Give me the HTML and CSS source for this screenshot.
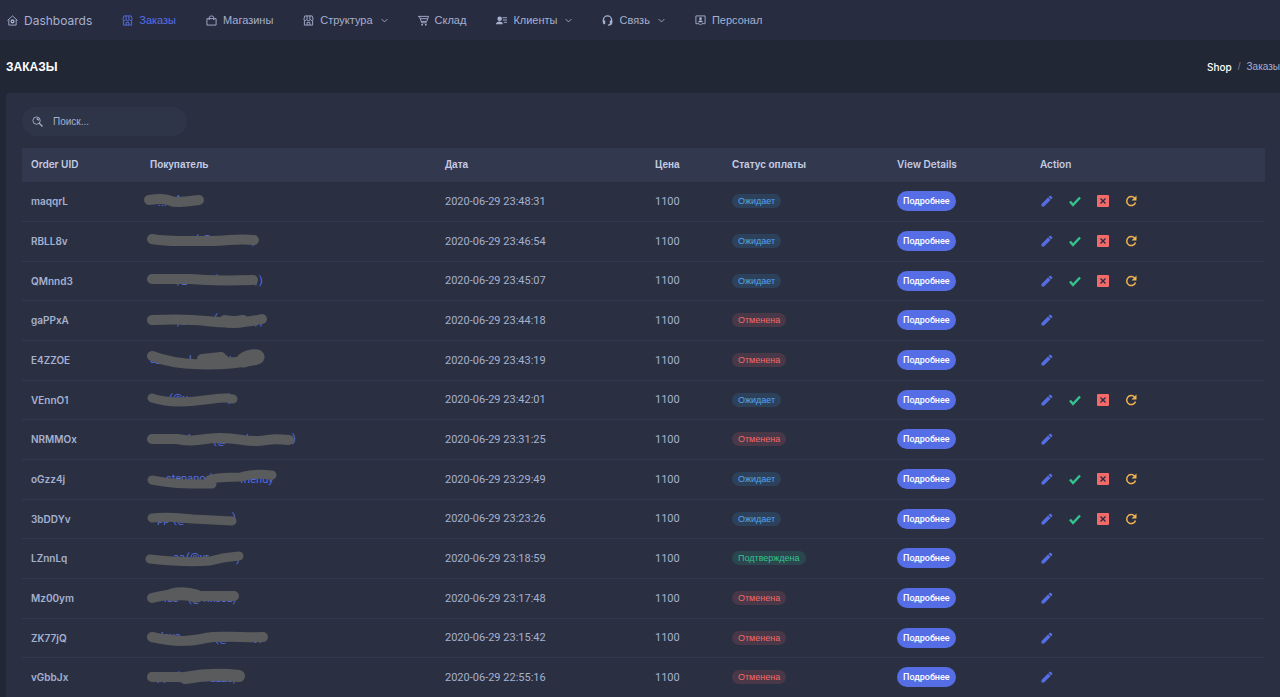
FILE: index.html
```html
<!DOCTYPE html>
<html lang="ru">
<head>
    <meta charset="UTF-8">
    <meta name="viewport" content="width=device-width, initial-scale=1.0">
    <title>Заказы</title>
    <link rel="stylesheet" href="styles.css">
</head>
<body>
    <!-- icons -->
    <svg class="sprite" aria-hidden="true">
        <symbol id="i-home" viewBox="0 0 24 24"><path d="M1 12 12 2l11 10M4 10v12h16V10" fill="none" stroke="currentColor" stroke-width="2"/><circle cx="12" cy="14" r="3" fill="none" stroke="currentColor" stroke-width="3"/></symbol>
        <symbol id="i-store" viewBox="0 0 24 24"><path d="M4 2h16l2 7c0 4-5 4-6 1-1 3-7 3-8 0-1 3-6 3-6-1zM9 2v8M15 2v8M3 12v10h18v-10M9 22v-6h6v6" fill="none" stroke="currentColor" stroke-width="2"/></symbol>
        <symbol id="i-bag" viewBox="0 0 24 24"><path d="M2 8h20v14H2zM7 11V6a5 4 0 0 1 10 0v5" fill="none" stroke="currentColor" stroke-width="2"/></symbol>
        <symbol id="i-cart" viewBox="0 0 24 24"><path d="M0 3h23l-4 11H7L3 3M5 8h16M7 14l1 3h11" fill="none" stroke="currentColor" stroke-width="2"/><circle cx="9" cy="21" r="2" fill="currentColor"/><circle cx="17" cy="21" r="2" fill="currentColor"/></symbol>
        <symbol id="i-users" viewBox="0 0 24 24"><circle cx="8" cy="8" r="5" fill="currentColor"/><path d="M0 20c0-8 15-8 15 0z" fill="currentColor"/><path d="M14 6h10M15 11h9M17 16h7" stroke="currentColor" stroke-width="2"/></symbol>
        <symbol id="i-phones" viewBox="0 0 24 24"><path d="M3 15v-4a9 9 0 0 1 18 0v6c0 3-3 5-8 5" fill="none" stroke="currentColor" stroke-width="3"/><path d="M2 12h5v8H4l-2-2zM17 12h5v6l-2 2h-3z" fill="currentColor"/></symbol>
        <symbol id="i-staff" viewBox="0 0 24 24"><path d="M2 2h20v17h-7l-3 3-3-3H2z" fill="none" stroke="currentColor" stroke-width="2"/><circle cx="12" cy="8" r="3" fill="currentColor"/><path d="M7 16c0-6 10-6 10 0z" fill="currentColor"/></symbol>
        <symbol id="i-down" viewBox="0 0 24 24"><path d="m2 7 10 10L22 7" fill="none" stroke="currentColor" stroke-width="3"/></symbol>
        <symbol id="i-search" viewBox="0 0 24 24"><circle cx="10" cy="10" r="8" fill="none" stroke="currentColor" stroke-width="2"/><path d="m15 15 8 8M10 6a4 4 0 0 1 4 4" fill="none" stroke="currentColor" stroke-width="3"/></symbol>
        <symbol id="i-pencil" viewBox="0 0 24 24"><path d="M1 23v-5L14 5l5 5L6 23zM15 4l2-2c1-1 2-1 3 0l2 2c1 1 1 2 0 3l-2 2z" fill="currentColor"/></symbol>
        <symbol id="i-check" viewBox="0 0 24 24"><path d="m2 13 6 7L22 5" fill="none" stroke="currentColor" stroke-width="5"/></symbol>
        <symbol id="i-close" viewBox="0 0 24 24"><path fill-rule="evenodd" d="M2 0h20q2 0 2 2v20q0 2-2 2H2q-2 0-2-2V2q0-2 2-2zM8 6 6 8l4 4-4 4 2 2 4-4 4 4 2-2-4-4 4-4-2-2-4 4z" fill="currentColor"/></symbol>
        <symbol id="i-refresh" viewBox="0 0 24 24"><path d="M19 6a9 9 0 1 0 2 9" fill="none" stroke="currentColor" stroke-width="3"/><path d="M23 1v10H13z" fill="currentColor"/></symbol>
    </svg>

    <nav class="topnav">
        <a href="#" class="latin"><svg class="icon"><use href="#i-home"/></svg>Dashboards</a>
        <a href="#" class="active"><svg class="icon"><use href="#i-store"/></svg>Заказы</a>
        <a href="#"><svg class="icon"><use href="#i-bag"/></svg>Магазины</a>
        <a href="#"><svg class="icon"><use href="#i-store"/></svg>Структура<svg class="arrow"><use href="#i-down"/></svg></a>
        <a href="#"><svg class="icon"><use href="#i-cart"/></svg>Склад</a>
        <a href="#"><svg class="icon"><use href="#i-users"/></svg>Клиенты<svg class="arrow"><use href="#i-down"/></svg></a>
        <a href="#"><svg class="icon"><use href="#i-phones"/></svg>Связь<svg class="arrow"><use href="#i-down"/></svg></a>
        <a href="#"><svg class="icon"><use href="#i-staff"/></svg>Персонал</a>
    </nav>

    <header class="page-title">
        <h1>ЗАКАЗЫ</h1>
        <div class="breadcrumbs">
            <a href="#" class="latin">Shop</a>
            <span class="slash">/</span>
            <span>Заказы</span>
        </div>
    </header>

    <main class="card">
        <label class="search" for="search">
            <svg class="icon"><use href="#i-search"/></svg>
            <input type="text" id="search" placeholder="Поиск..." aria-label="Поиск">
        </label>
        <table class="orders">
            <thead>
                <tr>
                    <th class="col-uid latin">Order UID</th>
                    <th class="col-customer">Покупатель</th>
                    <th class="col-date">Дата</th>
                    <th class="col-price">Цена</th>
                    <th class="col-status">Статус оплаты</th>
                    <th class="col-details latin">View Details</th>
                    <th class="latin">Action</th>
                </tr>
            </thead>
            <tbody id="orders"></tbody>
        </table>
    </main>

    <script>
        const statuses = {
            wait: "Ожидает",
            cancel: "Отменена",
            done: "Подтверждена"
        };

        // marks: pieces of the name left visible, strokes: [path, width] painted over them
        const orders = [
            { uid: "maqqrL", time: "23:48:31", status: "wait", marks: [[17, 24, "..."], [35, 21, "^"]],
              strokes: [["M8 18C20 16 26 17 30 19S42 20 58 18", 10]] },
            { uid: "RBLL8v", time: "23:46:54", status: "wait", marks: [[54, 21, "("], [61, 21, "@"], [111, 22, ")"]],
              strokes: [["M11 17C27 20 50 19 69 19S95 16 113 18", 10]] },
            { uid: "QMnnd3", time: "23:45:07", status: "wait", marks: [[36, 22, ","], [41, 22, "_"], [73, 21, "(g"], [114, 22, ","], [118, 22, ")"]],
              strokes: [["M11 17H49C60 18 76 19 112 18", 10]] },
            { uid: "gaPPxA", time: "23:44:18", status: "cancel", marks: [[36, 24, ","], [41, 23, "_"], [73, 21, "("], [114, 24, ", ,"]],
              strokes: [["M11 19C34 18 48 18 65 20S105 22 121 18", 10], ["M84 20Q92 22 102 20", 12]] },
            { uid: "E4ZZOE", time: "23:43:19", status: "cancel", marks: [[9, 22, "a_"], [48, 22, "l"], [85, 21, "v"]],
              strokes: [["M11 15C36 25 77 26 114 19", 10], ["M61 18 80 16 86 22 114 19", 10], ["M103 19Q110 15 116 16", 15]] },
            { uid: "VEnnO1", time: "23:42:01", status: "wait", marks: [[28, 21, "(@v"], [87, 21, ")"]],
              strokes: [["M11 17C33 24 56 20 72 18S84 17 92 18", 9]] },
            { uid: "NRMMOx", time: "23:31:25", status: "cancel", marks: [[47, 22, "l"], [72, 24, "(@"], [105, 22, "l"], [151, 22, ")"]],
              strokes: [["M11 19H36C56 23 58 18 79 18S103 22 117 21 128 18 148 20", 10]] },
            { uid: "oGzz4j", time: "23:29:49", status: "wait", marks: [[25, 22, "stepano ("], [99, 23, "friendy"]],
              strokes: [["M11 20C32 24 40 24 71 24", 9], ["M68 20Q76 17 100 17 110 13 131 15", 9]] },
            { uid: "3bDDYv", time: "23:23:26", status: "wait", marks: [[16, 23, "pp"], [32, 23, "(@"], [49, 23, "o"], [91, 21, ")"]],
              strokes: [["M11 18C27 16 40 18 52 19L91 21", 9]] },
            { uid: "LZnnLq", time: "23:18:59", status: "done", marks: [[32, 22, "aa"], [45, 22, "(@vr"], [95, 23, ")"]],
              strokes: [["M9 20Q45 24 69 22 83 18 98 17", 9]] },
            { uid: "Mz00ym", time: "23:17:48", status: "cancel", marks: [[23, 23, "lee"], [47, 23, "(@vikesa)"]],
              strokes: [["M11 19Q37 12 59 17H93", 10], ["M31 16Q43 13 55 17", 13]] },
            { uid: "ZK77jQ", time: "23:15:42", status: "cancel", marks: [[20, 21, "leva"], [74, 23, "(@"], [113, 22, "y)"]],
              strokes: [["M11 18C38 24 51 22 65 19S88 19 122 18", 10]] },
            { uid: "vGbbJx", time: "22:55:16", status: "cancel", marks: [[16, 23, "pp"], [35, 22, "(@"], [69, 24, "azzo,"]],
              strokes: [["M11 19H39", 10], ["M44 20Q70 15 98 18", 12]] }
        ];

        const icon = (name, label) =>
            `<button type="button" class="act ${name}" aria-label="${label}"><svg><use href="#i-${name}"/></svg></button>`;

        document.querySelector("#orders").innerHTML = orders.map(order => `
            <tr>
                <td class="uid">${order.uid}</td>
                <td class="customer">
                    <svg>
                        ${order.marks.map(m => `<text x="${m[0]}" y="${m[1]}">${m[2]}</text>`).join("")}
                        ${order.strokes.map(s => `<path d="${s[0]}" stroke-width="${s[1]}"/>`).join("")}
                    </svg>
                </td>
                <td>2020-06-29 ${order.time}</td>
                <td>1100</td>
                <td><span class="badge ${order.status}">${statuses[order.status]}</span></td>
                <td><button type="button" class="details">Подробнее</button></td>
                <td>
                    <div class="actions">
                        ${icon("pencil", "Изменить")}
                        ${order.status === "wait" ? icon("check", "Подтвердить") + icon("close", "Отменить") + icon("refresh", "Обновить") : ""}
                    </div>
                </td>
            </tr>`).join("");
    </script>
</body>
</html>
```
FILE: styles.css
```css
* {
    box-sizing: border-box;
}

body {
    margin: 0;
    background: #222736;
    color: #a6b0cf;
    font-family: "Liberation Sans", Arial, sans-serif;
    font-size: 10px;
    overflow: hidden;
}

a {
    color: inherit;
    text-decoration: none;
}

button {
    border: 0;
    font-family: inherit;
    cursor: pointer;
}

.sprite {
    display: none;
}

.latin {
    font-family: Inter, sans-serif;
}

/* top menu */
.topnav {
    display: flex;
    gap: 30px;
    height: 40px;
    padding: 0 7px;
    background: #282c40;
    font-size: 11px;
}

.topnav a {
    display: flex;
    align-items: center;
}

.topnav .latin {
    font-size: 12px;
}

.topnav .active {
    color: #556ee6;
}

.icon {
    width: 11px;
    height: 11px;
    margin-right: 6px;
}

.arrow {
    width: 7px;
    height: 7px;
    margin-left: 8px;
}

/* title */
.page-title {
    display: flex;
    align-items: center;
    justify-content: space-between;
    height: 53px;
    padding-left: 6px;
}

.page-title h1 {
    margin: 0;
    color: #fff;
    font-size: 12px;
}

.breadcrumbs {
    display: flex;
    gap: 6px;
}

.breadcrumbs a {
    color: #fff;
    font-weight: 500;
}

.slash {
    color: #74788d;
}

/* card */
.card {
    margin-left: 6px;
    padding: 14px 15px 20px 16px;
    background: #2a3042;
    border-radius: 3px 0 0 0;
}

.search {
    display: flex;
    align-items: center;
    width: 165px;
    height: 29px;
    margin-bottom: 12px;
    padding: 0 10px;
    border-radius: 15px;
    background: #2e3548;
}

.search input {
    width: 100px;
    padding: 0;
    margin-left: 4px;
    border: 0;
    outline: 0;
    background: none;
    color: inherit;
    font-family: inherit;
    font-size: 10px;
}

.search input::placeholder {
    color: #a6b0cf;
}

/* orders */
.orders {
    width: 100%;
    border-collapse: collapse;
    table-layout: fixed;
}

.orders th,
.orders td {
    padding: 0 9px;
    text-align: left;
}

.orders th {
    height: 33px;
    background: #32394e;
    color: #c3cbe4;
    font-size: 10px;
}

.orders th.latin {
    font-weight: 600;
}

.orders td {
    height: 40px;
    border-top: 1px solid #32394e;
    font-family: Roboto, sans-serif;
    font-size: 11px;
}

.orders tr:nth-child(3n) td {
    height: 39px;
}

.col-uid {
    width: 119px;
}

.col-customer {
    width: 295px;
}

.col-date {
    width: 210px;
}

.col-price {
    width: 77px;
}

.col-status {
    width: 165px;
}

.col-details {
    width: 143px;
}

.orders .uid {
    font-family: Inter, sans-serif;
    font-size: 10px;
    font-weight: 600;
}

.orders .customer {
    padding: 0;
}

.customer svg {
    display: block;
    width: 180px;
    height: 38px;
}

.customer text {
    fill: #556ee6;
}

.customer path {
    fill: none;
    stroke: #5a5b5c;
    stroke-linecap: round;
    stroke-linejoin: round;
}

.badge {
    display: inline-block;
    padding: 0 6px;
    border-radius: 7px;
    font-family: "Liberation Sans", Arial, sans-serif;
    font-size: 9px;
    line-height: 14px;
}

.wait {
    color: #50a5f1;
    background: #2e415b;
}

.cancel {
    color: #f46a6a;
    background: #483848;
}

.done {
    color: #34c38f;
    background: #2b464d;
}

.details {
    display: block;
    height: 20px;
    padding: 0 6px;
    border-radius: 10px;
    background: #556ee6;
    color: #fff;
    font-family: Roboto, sans-serif;
    font-size: 9px;
    font-weight: 500;
}

.actions {
    display: flex;
    gap: 16px;
    padding-left: 1px;
}

.act {
    display: block;
    width: 12px;
    height: 12px;
    padding: 0;
    background: none;
}

.act svg {
    display: block;
    width: 100%;
    height: 100%;
}

.pencil {
    color: #556ee6;
}

.check {
    color: #34c38f;
}

.close {
    color: #f46a6a;
}

.refresh {
    color: #f1b44c;
}
```
